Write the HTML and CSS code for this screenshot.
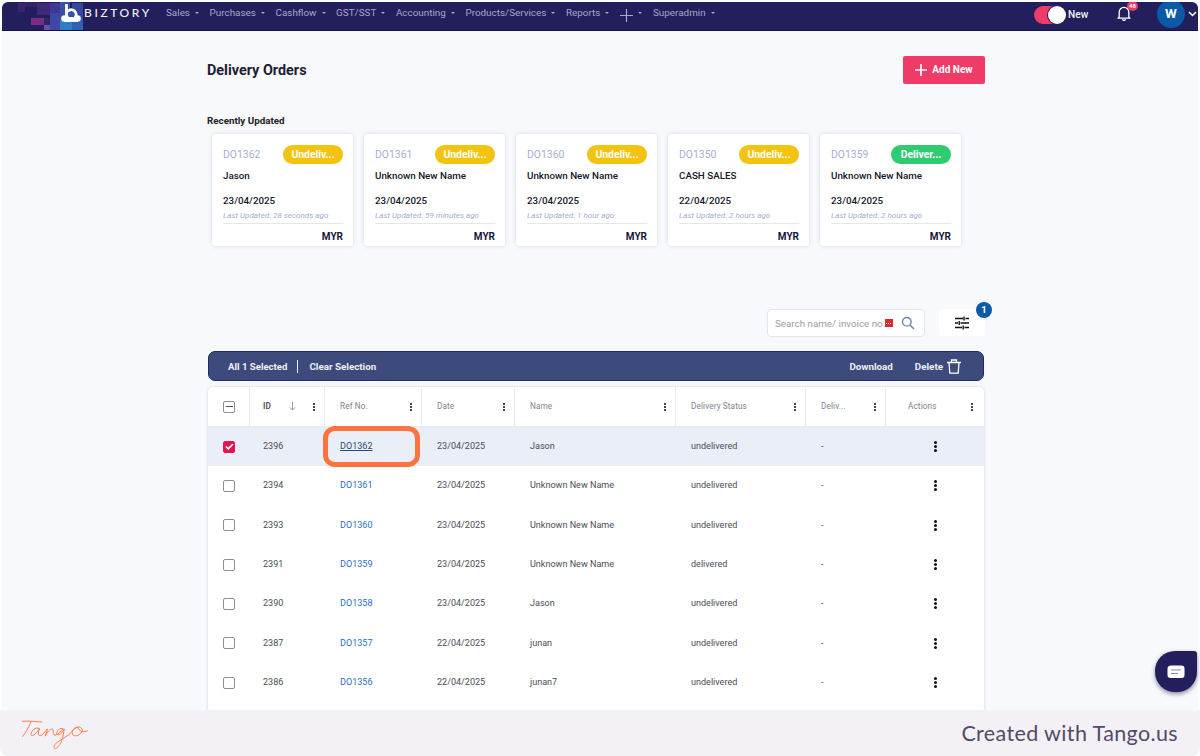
FILE: index.html
```html
<!DOCTYPE html>
<html lang="en">
<head>
<meta charset="utf-8">
<title>Delivery Orders</title>
<link rel="stylesheet" href="styles.css">
</head>
<body>
<div class="frame">
  <header class="nav">
    <div class="brand">
      <svg class="mosaic" width="84" height="29" viewBox="0 0 84 29" aria-hidden="true">
        <rect x="16" y="1" width="7" height="9" fill="#3c2470"/><rect x="23" y="0" width="12" height="5" fill="#33246a"/><rect x="35" y="1" width="13" height="12" fill="#3d2a78"/>
        <rect x="29" y="16" width="13" height="7" fill="#7a2c86"/><rect x="42" y="16" width="6" height="7" fill="#2c2768"/><rect x="48" y="1" width="10" height="10" fill="#3c3a92"/>
        <rect x="48" y="11" width="10" height="18" fill="#4048a6"/><rect x="42" y="23" width="6" height="6" fill="#6a50ac"/><rect x="58" y="0" width="10" height="18" fill="#3a4fa8"/>
        <rect x="58" y="18" width="12" height="11" fill="#2f7dc2"/><rect x="70" y="1" width="11" height="17" fill="#37479e"/><rect x="70" y="18" width="11" height="11" fill="#2c62ae"/>
      </svg>
      <svg class="b-mark" width="20" height="20" viewBox="0 0 20 20" aria-hidden="true">
        <circle cx="3.500" cy="14.500" r="3.300" fill="#fff"/><circle cx="16.500" cy="14.500" r="3.300" fill="#fff"/><rect x="3" y="13" width="14" height="5" fill="#fff"/>
        <path d="M5.500 1v9.500a4.800 4.800 0 1 0 1.600-3.500" fill="none" stroke="#fff" stroke-width="2.800" stroke-linecap="round"/>
        <circle cx="10.300" cy="10.500" r="2.600" fill="#2a5aa5"/>
      </svg>
      <span class="wordmark">BIZTORY</span>
    </div>
    <nav class="menu">
      <a class="menu-item">Sales</a>
      <a class="menu-item">Purchases</a>
      <a class="menu-item">Cashflow</a>
      <a class="menu-item">GST/SST</a>
      <a class="menu-item">Accounting</a>
      <a class="menu-item">Products/Services</a>
      <a class="menu-item">Reports</a>
      <a class="menu-item menu-plus"><svg width="13" height="13" viewBox="0 0 13 13" aria-hidden="true"><path d="M6.500 0v13M0 6.500h13" stroke="#a9a6c9" stroke-width="1.200"/></svg></a>
      <a class="menu-item">Superadmin</a>
    </nav>
    <div class="nav-right">
      <span class="toggle"><span class="knob"></span></span>
      <span class="toggle-label">New</span>
      <span class="bell">
        <svg width="14" height="15" viewBox="0 0 14 15" aria-hidden="true"><path d="M2.200 11V6.200a4.800 4.800 0 0 1 9.600 0V11l1.200 1.200H1z M5.400 13.200a1.700 1.700 0 0 0 3.200 0" fill="none" stroke="#fff" stroke-width="1.300" stroke-linejoin="round"/></svg>
        <span class="bell-badge">48</span>
      </span>
      <span class="avatar">W</span>
      <svg class="caret" width="9" height="6" viewBox="0 0 9 6" aria-hidden="true"><path d="M1 1l3.500 3.500L8 1" fill="none" stroke="#fff" stroke-width="1.500"/></svg>
    </div>
  </header>

  <main class="page">
    <div class="container">
      <div class="title-row">
        <h1 class="title">Delivery Orders</h1>
        <button class="add-btn"><svg width="12" height="12" viewBox="0 0 12 12" aria-hidden="true"><path d="M6 0v12M0 6h12" stroke="#fff" stroke-width="1.600"/></svg>Add New</button>
      </div>

      <h2 class="recent-title">Recently Updated</h2>
      <div class="cards">
        <article class="card">
          <div class="card-top"><span class="card-ref">DO1362</span><span class="pill pill-yellow">Undeliv...</span></div>
          <div class="card-name">Jason</div>
          <div class="card-date">23/04/2025</div>
          <div class="card-updated">Last Updated: 28 seconds ago</div>
          <div class="card-cur">MYR</div>
        </article>
        <article class="card">
          <div class="card-top"><span class="card-ref">DO1361</span><span class="pill pill-yellow">Undeliv...</span></div>
          <div class="card-name">Unknown New Name</div>
          <div class="card-date">23/04/2025</div>
          <div class="card-updated">Last Updated: 59 minutes ago</div>
          <div class="card-cur">MYR</div>
        </article>
        <article class="card">
          <div class="card-top"><span class="card-ref">DO1360</span><span class="pill pill-yellow">Undeliv...</span></div>
          <div class="card-name">Unknown New Name</div>
          <div class="card-date">23/04/2025</div>
          <div class="card-updated">Last Updated: 1 hour ago</div>
          <div class="card-cur">MYR</div>
        </article>
        <article class="card">
          <div class="card-top"><span class="card-ref">DO1350</span><span class="pill pill-yellow">Undeliv...</span></div>
          <div class="card-name">CASH SALES</div>
          <div class="card-date">22/04/2025</div>
          <div class="card-updated">Last Updated: 2 hours ago</div>
          <div class="card-cur">MYR</div>
        </article>
        <article class="card">
          <div class="card-top"><span class="card-ref">DO1359</span><span class="pill pill-green">Deliver...</span></div>
          <div class="card-name">Unknown New Name</div>
          <div class="card-date">23/04/2025</div>
          <div class="card-updated">Last Updated: 2 hours ago</div>
          <div class="card-cur">MYR</div>
        </article>
      </div>

      <div class="tools">
        <div class="search">
          <span class="search-text">Search name/ invoice no.</span>
          <span class="search-tag"></span>
          <svg width="14" height="14" viewBox="0 0 14 14" aria-hidden="true"><circle cx="5.800" cy="5.800" r="4.300" fill="none" stroke="#6d83ad" stroke-width="1.400"/><path d="M9 9l4 4" stroke="#6d83ad" stroke-width="1.400"/></svg>
        </div>
        <div class="filter">
          <svg width="14" height="14" viewBox="0 0 14 14" aria-hidden="true"><path d="M0 2.500h8M10.500 2.500H14M0 7h3M5.500 7H14M0 11.500h7M9.500 11.500H14M9 .5v4M4.200 5v4M8.200 9.500v4" fill="none" stroke="#111" stroke-width="1.400"/></svg>
          <span class="filter-badge">1</span>
        </div>
      </div>

      <div class="select-bar">
        <span class="sel-count">All 1 Selected</span>
        <span class="sel-clear">Clear Selection</span>
        <span class="sel-spacer"></span>
        <span class="sel-action">Download</span>
        <span class="sel-action sel-delete">Delete
          <svg width="14" height="15" viewBox="0 0 14 15" aria-hidden="true"><path d="M0 3.500h14M2 3.500l.8 10.700h8.400L12 3.500M4.500 3.500V1h5v2.500" fill="none" stroke="#fff" stroke-width="1.300"/></svg>
        </span>
      </div>

      <div class="table">
        <div class="row head">
          <div class="cell cell-check"><span class="check check-minus"></span></div>
          <div class="cell cell-id"><b>ID</b><svg class="sort" width="7" height="9" viewBox="0 0 7 9" aria-hidden="true"><path d="M3.500 0v8M.8 5.300l2.700 2.700 2.700-2.700" fill="none" stroke="#8a8f99" stroke-width=".9"/></svg><i class="kebab-s"></i></div>
          <div class="cell">Ref No.<i class="kebab-s"></i></div>
          <div class="cell">Date<i class="kebab-s"></i></div>
          <div class="cell">Name<i class="kebab-s"></i></div>
          <div class="cell">Delivery Status<i class="kebab-s"></i></div>
          <div class="cell">Deliv...<i class="kebab-s"></i></div>
          <div class="cell cell-actions">Actions<i class="kebab-s"></i></div>
        </div>

        <div class="row selected">
          <div class="cell cell-check"><span class="check check-on"><svg width="9" height="7" viewBox="0 0 9 7" aria-hidden="true"><path d="M1 3.500l2.300 2.300L8 1" fill="none" stroke="#fff" stroke-width="1.700"/></svg></span></div>
          <div class="cell cell-id">2396</div><div class="cell"><a class="ref ref-on">DO1362</a></div><div class="cell">23/04/2025</div><div class="cell">Jason</div><div class="cell">undelivered</div><div class="cell">-</div><div class="cell cell-more"><i class="kebab"></i></div>
        </div>
        <div class="row">
          <div class="cell cell-check"><span class="check"></span></div>
          <div class="cell cell-id">2394</div><div class="cell"><a class="ref">DO1361</a></div><div class="cell">23/04/2025</div><div class="cell">Unknown New Name</div><div class="cell">undelivered</div><div class="cell">-</div><div class="cell cell-more"><i class="kebab"></i></div>
        </div>
        <div class="row">
          <div class="cell cell-check"><span class="check"></span></div>
          <div class="cell cell-id">2393</div><div class="cell"><a class="ref">DO1360</a></div><div class="cell">23/04/2025</div><div class="cell">Unknown New Name</div><div class="cell">undelivered</div><div class="cell">-</div><div class="cell cell-more"><i class="kebab"></i></div>
        </div>
        <div class="row">
          <div class="cell cell-check"><span class="check"></span></div>
          <div class="cell cell-id">2391</div><div class="cell"><a class="ref">DO1359</a></div><div class="cell">23/04/2025</div><div class="cell">Unknown New Name</div><div class="cell">delivered</div><div class="cell">-</div><div class="cell cell-more"><i class="kebab"></i></div>
        </div>
        <div class="row">
          <div class="cell cell-check"><span class="check"></span></div>
          <div class="cell cell-id">2390</div><div class="cell"><a class="ref">DO1358</a></div><div class="cell">23/04/2025</div><div class="cell">Jason</div><div class="cell">undelivered</div><div class="cell">-</div><div class="cell cell-more"><i class="kebab"></i></div>
        </div>
        <div class="row">
          <div class="cell cell-check"><span class="check"></span></div>
          <div class="cell cell-id">2387</div><div class="cell"><a class="ref">DO1357</a></div><div class="cell">22/04/2025</div><div class="cell">junan</div><div class="cell">undelivered</div><div class="cell">-</div><div class="cell cell-more"><i class="kebab"></i></div>
        </div>
        <div class="row">
          <div class="cell cell-check"><span class="check"></span></div>
          <div class="cell cell-id">2386</div><div class="cell"><a class="ref">DO1356</a></div><div class="cell">22/04/2025</div><div class="cell">junan7</div><div class="cell">undelivered</div><div class="cell">-</div><div class="cell cell-more"><i class="kebab"></i></div>
        </div>
        <div class="row"></div>
      </div>
    </div>
  </main>

  <div class="highlight"></div>
  <div class="chat">
    <svg width="18" height="14" viewBox="0 0 18 14" aria-hidden="true"><path d="M4 .5h10.500Q17.500 .5 17.500 3.500V10Q17.500 13 14.500 13H3.500Q.5 13 .5 10V4Q.5 .5 4 .5z" fill="#fff"/><path d="M4 5h10M4 8.500h7" stroke="#8d8bb0" stroke-width="1.100"/></svg>
  </div>

  <footer class="tango">
    <svg class="tango-logo" width="70" height="33" viewBox="60 85 210 100" aria-label="Tango logo" role="img">
      <path d="M65 95C85 93 105 96 125 97M92 97C85 115 75 130 67 141" fill="none" stroke="#ff7a4d" stroke-width="3" stroke-linecap="round"/>
      <path d="M118 117C105 110 93 125 92 135C92 142 102 140 118 118C113 130 113 140 122 138C130 136 135 125 142 118C140 128 137 135 135 140C142 128 150 118 157 118C163 120 155 137 165 137C175 136 182 125 190 118C180 112 170 125 170 132C172 140 185 135 193 118C190 140 185 165 170 176C160 182 158 170 170 160C185 148 205 140 215 128C220 120 225 115 235 113C222 112 212 128 220 137C230 143 245 135 248 122C247 113 237 110 233 113C238 125 250 130 263 124" fill="none" stroke="#ff7a4d" stroke-width="3" stroke-linecap="round" stroke-linejoin="round"/>
    </svg>
    <span class="tango-text">Created with Tango.us</span>
  </footer>
</div>
</body>
</html>
```
FILE: styles.css
```css
* { box-sizing: border-box; }
html, body { margin: 0; height: 756px; overflow: hidden; background: #fff; }
body { font-family: Roboto, "Liberation Sans", sans-serif; color: #181c32; position: relative; }
.frame { height: 756px; display: flex; flex-direction: column; padding-top: 2px; position: relative; }

/* nav */
.nav { height: 29px; margin: 0 2px; background: #231f5c; border-radius: 6px 6px 0 0; display: flex; align-items: flex-start; position: relative; flex: none; overflow: hidden; border-bottom: 1px solid #14114a; }
.brand { width: 164px; height: 29px; position: relative; flex: none; }
.mosaic { position: absolute; left: 0; top: 0; }
.b-mark { position: absolute; left: 59px; top: 2px; }
.wordmark { position: absolute; left: 82px; top: 3px; color: #f1f1f6; font: 500 12px/15px Lato, "Open Sans", sans-serif; letter-spacing: 2.6px; }
.menu { display: flex; align-items: center; height: 21px; }
.menu-item { display: flex; align-items: center; color: #a9a6c9; font-size: 9.9px; line-height: 21px; margin-right: 10.6px; white-space: nowrap; }
.menu-item::after { content: ""; margin-left: 5px; border: 2.2px solid transparent; border-top: 2.2px solid #a9a6c9; border-bottom: 0; width: 0; height: 0; }
.menu-plus { padding-top: 6px; margin-right: 11px; }
.menu-plus::after { margin-top: -6px; }
.nav-right { position: absolute; right: 0; top: 0; width: 164px; height: 28px; }
.toggle { position: absolute; left: 0; top: 4px; width: 32px; height: 18px; border-radius: 10px; background: #ef3b68; }
.knob { position: absolute; right: 0; top: 0; width: 18px; height: 18px; border-radius: 50%; background: #fff; box-shadow: 0 0 0 1px #231f5c; }
.toggle-label { position: absolute; left: 34px; top: 5px; font: 500 10.2px/15px Roboto, sans-serif; color: #f1f1f6; }
.bell { position: absolute; left: 83px; top: 4px; width: 14px; height: 15px; }
.bell svg { display: block; }
.bell-badge { position: absolute; left: 10px; top: -5px; width: 11px; height: 10px; border-radius: 50%; background: #ef3b68; color: #fff; font: 700 6px/10px Roboto, sans-serif; text-align: center; }
.avatar { position: absolute; left: 123px; top: -2px; width: 28px; height: 28px; border-radius: 50%; background: #0b5aa8; color: #fff; font: 700 13.5px/26px Roboto, sans-serif; text-align: center; }
.caret { position: absolute; left: 154px; top: 9px; }

/* page */
.page { height: 679px; flex: none; margin: 0 2px; background: #f8f9fd; overflow: hidden; }
.container { width: 777px; margin-left: 205px; }
.title-row { display: flex; justify-content: space-between; align-items: flex-start; height: 53px; padding-top: 25px; }
.title { margin: 5px 0 0; font-size: 14.4px; line-height: 20px; font-weight: 700; color: #1c2033; }
.add-btn { width: 82px; height: 28px; border: 0; border-radius: 2px; background: #ef3b68; color: #fff; font: 700 10px/28px Roboto, sans-serif; display: flex; align-items: center; justify-content: center; gap: 5px; padding: 0; margin-right: -1px; }
.recent-title { margin: 29px 0 0; font-size: 9.8px; line-height: 15px; font-weight: 700; color: #222; }
.cards { display: flex; gap: 11px; margin: 6px 0 0 5px; }
.card { width: 141px; height: 112px; background: #fff; border-radius: 3px; box-shadow: 0 0 4px rgba(60, 70, 110, .18); padding: 10px 10px 0 11px; flex: none; }
.card-top { display: flex; justify-content: space-between; align-items: center; height: 20px; }
.card-ref { font-size: 10.4px; color: #a4aed0; }
.pill { width: 60px; height: 19px; border-radius: 10px; color: #fff; font: 700 10.4px/19px Roboto, sans-serif; text-align: center; }
.pill-yellow { background: #f2c40f; }
.pill-green { background: #2ecb71; }
.card-name { margin-top: 4px; font-size: 9.8px; line-height: 15px; font-weight: 500; color: #16182a; }
.card-date { margin-top: 10px; font-size: 9.8px; line-height: 15px; font-weight: 500; color: #16182a; }
.card-updated { margin-top: 2px; font-size: 8.05px; line-height: 12px; font-style: italic; color: #a4aed0; padding-bottom: 1px; border-bottom: 1px solid #e4e6ee; }
.card-cur { margin-top: 7px; text-align: right; font-size: 10px; line-height: 12px; font-weight: 700; color: #16183a; }

/* tools */
.tools { display: flex; justify-content: flex-end; margin-top: 63px; height: 42px; }
.search { width: 158px; height: 28px; background: #fff; border: 1px solid #e3e6ef; border-radius: 4px; display: flex; align-items: center; padding: 0 9px 0 7px; margin-right: 14px; }
.search-text { font-size: 9.8px; color: #9a9ea8; white-space: nowrap; width: 110px; overflow: hidden; }
.search-tag { width: 8px; height: 8px; background: #d92b2b; flex: none; display: flex; align-items: center; justify-content: center; }
.search-tag::after { content: ""; width: 6px; height: 1px; background: repeating-linear-gradient(90deg, #fff 0 1px, transparent 1px 2px); }
.search svg { margin-left: 8px; flex: none; }
.filter { width: 46px; height: 27px; background: #fff; border-radius: 3px; display: flex; align-items: center; justify-content: center; position: relative; margin-right: -1px; }
.filter-badge { position: absolute; right: -7px; top: -7px; width: 16px; height: 16px; border-radius: 50%; background: #0b5aa8; color: #fff; font: 700 9.6px/16px Roboto, sans-serif; text-align: center; }

.select-bar { height: 30px; background: #3c4a7c; border: 1px solid #1d2a6a; border-radius: 7px; margin-left: 1px; display: flex; align-items: center; font-size: 9.8px; font-weight: 700; padding: 0 22px 0 19px; color: #eef0f6; }
.sel-count { font-size: 9.6px; padding-right: 10px; border-right: 1px solid #eef0f6; line-height: 13px; }
.sel-clear { margin-left: 11px; }
.sel-spacer { flex: 1; }
.sel-action { display: flex; align-items: center; gap: 4px; }
.sel-delete { margin-left: 22px; }

/* table */
.table { margin: 6px 0 0 1px; background: #fff; border-radius: 5px 5px 0 0; box-shadow: 0 0 3px rgba(60, 70, 110, .2); }
.row { display: grid; grid-template-columns: 42px 75px 97px 93px 161px 130px 80px 98px; height: 39.33px; font-size: 9.05px; line-height: 11px; color: #4a4d57; }
.head { height: 40px; font-size: 8.2px; letter-spacing: .12px; color: #7e828c; border-bottom: 1px solid #e9ebf1; }
.cell { display: flex; align-items: center; padding-left: 15px; position: relative; white-space: nowrap; }
.head .cell { border-right: 1px solid #ecedf2; }
.head .cell:last-child { border-right: 0; }
.cell-check { padding-left: 15px; }
.cell-id { padding-left: 13px; }
.cell-id b { color: #55585f; font-weight: 700; }
.sort { position: absolute; left: 39px; top: 15px; }
.cell-actions { padding-left: 22px; }
.cell-actions .kebab-s { right: 11px; }
.cell-more { justify-content: center; padding: 0; }
.selected { background: #eaeef6; }
.check { width: 12px; height: 12px; border: 1px solid #8d8f96; border-radius: 2px; background: #fff; display: flex; align-items: center; justify-content: center; position: relative; }
.check-minus::after { content: ""; width: 7px; height: 1px; background: #55585f; }
.check-on { background: #e5134e; border-color: #e5134e; }
.ref { color: #2a6fc4; }
.ref-on { color: #2d4a7a; text-decoration: underline; }
.kebab-s { position: absolute; right: 9px; top: 16px; width: 2px; height: 2px; background: #44464d; box-shadow: 0 3px 0 #44464d, 0 6px 0 #44464d; }
.kebab { width: 3px; height: 3px; border-radius: 50%; background: #111; box-shadow: 0 -4px 0 #111, 0 4px 0 #111; }

/* overlays */
.highlight { position: absolute; left: 323px; top: 426px; width: 97px; height: 41px; border: 5px solid #ff7340; border-radius: 12px; }
.chat { position: absolute; left: 1155px; top: 651px; width: 42px; height: 41px; background: #231f5c; border-radius: 20px 3px 20px 20px; box-shadow: 0 2px 4px rgba(30, 30, 60, .5); display: flex; align-items: center; justify-content: center; }
.chat svg { display: block; }

/* tango footer */
.tango { height: 46px; flex: none; background: #f3f1f6; border-radius: 0 0 8px 8px; display: flex; align-items: center; justify-content: space-between; padding: 0 22px 0 20px; }
.tango-logo { display: block; margin-top: 3px; }
.tango-text { font: 400 21.5px/30px Lato, "Open Sans", sans-serif; letter-spacing: .37px; color: #54496a; }
```
